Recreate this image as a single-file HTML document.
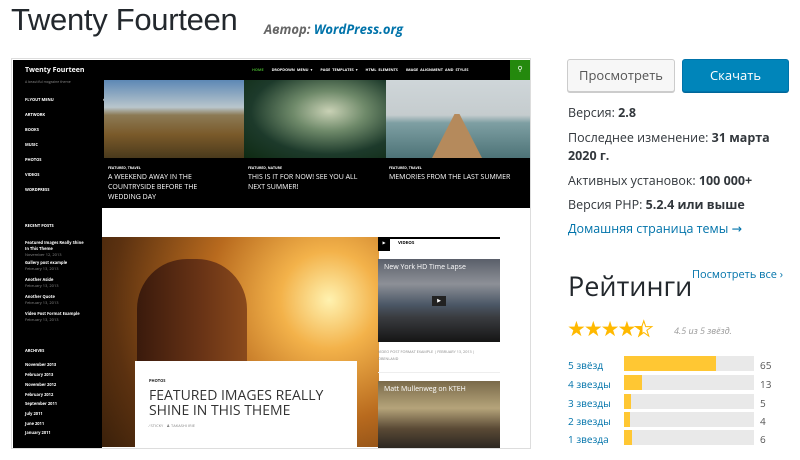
<!DOCTYPE html>
<html><head><meta charset="utf-8"><style>
*{margin:0;padding:0;box-sizing:border-box}
body{width:800px;height:460px;background:#fff;font-family:"Open Sans","DejaVu Sans","Liberation Sans",sans-serif;position:relative;overflow:hidden;color:#32373c}
.a{position:absolute}
.t{white-space:nowrap}
.sb div{position:absolute;left:13px;color:#fff;font-size:4px;font-weight:bold}
.wt{color:#fff;font-size:8px;line-height:10px}
.bar{position:absolute;left:624px;width:130px;height:15px;background:#e9e9e9}
.bar i{display:block;height:100%;background:#ffc733}
.rl{position:absolute;left:568px;font-size:10px;color:#0073aa}
.rn{position:absolute;left:760px;font-size:10px;color:#555}
</style></head><body>
<div class="a t" style="left:11px;top:2px;font-size:31px;font-weight:300;color:#23282d;letter-spacing:-0.3px;font-family:'Liberation Sans',sans-serif">Twenty Fourteen</div>
<div class="a t" style="left:264px;top:20px;font-size:13px;font-style:italic;font-weight:bold;color:#666">Автор: <span style="color:#0073aa">WordPress.org</span></div>

<div class="a" style="left:11px;top:58px;width:520px;height:391px;border:1px solid #ddd;background:#fff;overflow:hidden">
 <div class="a" style="left:1px;top:1px;width:517px;height:148px;background:#000"></div>
 <div class="a" style="left:1px;top:1px;width:89px;height:389px;background:#000"></div>
 <div class="a t" style="left:13px;top:7px;color:#fff;font-size:7px;font-weight:bold">Twenty Fourteen</div>
 <div class="a t" style="left:13px;top:21px;color:#888;font-size:3.5px">A beautiful magazine theme</div>
 <div class="sb">
  <div style="top:39px">FLYOUT MENU <span style="margin-left:48px">›</span></div>
  <div style="top:54px">ARTWORK</div><div style="top:69px">BOOKS</div><div style="top:84px">MUSIC</div>
  <div style="top:99px">PHOTOS</div><div style="top:114px">VIDEOS</div><div style="top:129px">WORDPRESS</div>
  <div style="top:165px">RECENT POSTS</div>
  <div style="top:182px;line-height:6px">Featured Images Really Shine<br>In This Theme<br><span style="color:#888;font-weight:normal">November 12, 2013</span></div>
  <div style="top:202px;line-height:6px">Gallery post example<br><span style="color:#888;font-weight:normal">February 13, 2013</span></div>
  <div style="top:219px;line-height:6px">Another Aside<br><span style="color:#888;font-weight:normal">February 13, 2013</span></div>
  <div style="top:236px;line-height:6px">Another Quote<br><span style="color:#888;font-weight:normal">February 13, 2013</span></div>
  <div style="top:253px;line-height:6px">Video Post Format Example<br><span style="color:#888;font-weight:normal">February 13, 2013</span></div>
  <div style="top:290px">ARCHIVES</div>
  <div style="top:304px">November 2013</div><div style="top:314px">February 2013</div><div style="top:324px">November 2012</div>
  <div style="top:334px">February 2012</div><div style="top:343px">September 2011</div><div style="top:353px">July 2011</div>
  <div style="top:363px">June 2011</div><div style="top:372px">January 2011</div>
 </div>
 <div class="a t" style="left:240px;top:8px;color:#fff;font-size:3.8px;font-weight:bold;word-spacing:1px"><span style="color:#41a62a">HOME</span> &nbsp;&nbsp; DROPDOWN MENU ▾ &nbsp;&nbsp; PAGE TEMPLATES ▾ &nbsp;&nbsp; HTML ELEMENTS &nbsp;&nbsp; IMAGE ALIGNMENT AND STYLES</div>
 <div class="a" style="left:498px;top:1px;width:20px;height:20px;background:#24890d;color:#fff;font-size:7px;text-align:center;line-height:20px">⚲</div>
 <div class="a" style="left:92px;top:21px;width:140px;height:78px;background:linear-gradient(180deg,#5d88b5 0%,#b9c6cc 35%,#8c7a55 45%,#7a5a2a 70%,#4a3a1c 100%)"></div>
 <div class="a" style="left:232px;top:21px;width:142px;height:78px;background:radial-gradient(ellipse at 60% 40%,#c9d1b5 0%,#6f8a6a 30%,#1d3a2b 65%,#0e2a12 100%)"></div>
 <div class="a" style="left:374px;top:21px;width:144px;height:78px;background:linear-gradient(180deg,#cfd6d9 0%,#c5ccce 45%,#7e9fa3 55%,#4d7377 100%)"></div>
 <div class="a" style="left:420px;top:55px;width:50px;height:44px;background:#b58a5c;clip-path:polygon(45% 0,55% 0,100% 100%,0 100%)"></div>
 <div class="a wt" style="left:96px;top:105px;font-size:3.5px;font-weight:bold">FEATURED, TRAVEL</div>
 <div class="a wt" style="left:236px;top:105px;font-size:3.5px;font-weight:bold">FEATURED, NATURE</div>
 <div class="a wt" style="left:377px;top:105px;font-size:3.5px;font-weight:bold">FEATURED, TRAVEL</div>
 <div class="a wt" style="left:96px;top:114px;font-size:7px">A WEEKEND AWAY IN THE<br>COUNTRYSIDE BEFORE THE<br>WEDDING DAY</div>
 <div class="a wt" style="left:236px;top:114px;font-size:7px">THIS IS IT FOR NOW! SEE YOU ALL<br>NEXT SUMMER!</div>
 <div class="a wt" style="left:377px;top:114px;font-size:7px">MEMORIES FROM THE LAST SUMMER</div>
 <div class="a" style="left:90px;top:178px;width:277px;height:210px;background:radial-gradient(circle at 82% 30%,#fff2b0 0%,#f3b24a 18%,#b86a1e 45%,#5b3110 80%,#3a200a 100%)"></div>
 <div class="a" style="left:125px;top:200px;width:110px;height:188px;border-radius:50px 50px 10px 10px;background:linear-gradient(90deg,#3a1a0c,#6a3416 60%,#8a4a1c)"></div>
 <div class="a" style="left:123px;top:302px;width:222px;height:88px;background:#fff"></div>
 <div class="a t" style="left:137px;top:320px;font-size:4px;font-weight:bold;color:#222">PHOTOS</div>
 <div class="a" style="left:137px;top:329px;font-size:14px;line-height:15px;color:#333">FEATURED IMAGES REALLY<br>SHINE IN THIS THEME</div>
 <div class="a t" style="left:137px;top:364px;font-size:4px;color:#888">⁄ STICKY &nbsp; ♟ TAKASHI IRIE</div>
 <div class="a" style="left:366px;top:178px;width:122px;height:2px;background:#000"></div>
 <div class="a" style="left:366px;top:178px;width:12px;height:14px;background:#000;color:#fff;font-size:4px;text-align:center;line-height:14px">▶</div>
 <div class="a t" style="left:386px;top:181px;font-size:4.5px;font-weight:bold;color:#000">VIDEOS</div>
 <div class="a" style="left:366px;top:200px;width:122px;height:83px;background:linear-gradient(180deg,#5a5f6a 0%,#8d9097 30%,#4b5766 55%,#3a3c40 70%,#151515 100%)"></div>
 <div class="a t" style="left:372px;top:204px;font-size:7px;color:#fff">New York HD Time Lapse</div>
 <div class="a" style="left:420px;top:237px;width:14px;height:10px;background:#222;color:#fff;font-size:5px;text-align:center;line-height:10px">▶</div>
 <div class="a" style="left:366px;top:290px;font-size:3.8px;line-height:7px;color:#888">VIDEO POST FORMAT EXAMPLE | FEBRUARY 13, 2013 |<br>OBENLAND</div>
 <div class="a" style="left:366px;top:313px;width:122px;height:1px;background:#eee"></div>
 <div class="a" style="left:366px;top:322px;width:122px;height:68px;background:linear-gradient(180deg,#7a6a4a 0%,#b5a47a 40%,#5a4a35 70%,#2a2520 100%)"></div>
 <div class="a t" style="left:372px;top:326px;font-size:7px;color:#fff">Matt Mullenweg on KTEH</div>
</div>

<div class="a" style="left:567px;top:59px;width:108px;height:33px;border:1px solid #ccc;border-radius:3px;background:#f7f7f7;color:#555;font-size:13px;text-align:center;line-height:31px;box-shadow:0 1px 0 #ccc">Просмотреть</div>
<div class="a" style="left:682px;top:59px;width:107px;height:33px;border-radius:3px;background:#0085ba;border:1px solid #0073aa;color:#fff;font-size:13px;text-align:center;line-height:31px;box-shadow:0 1px 0 #006799">Скачать</div>
<div class="a t" style="left:568px;top:104px;font-size:12.5px;color:#32373c">Версия: <b>2.8</b></div>
<div class="a t" style="left:568px;top:129px;font-size:12.5px;line-height:18px;color:#32373c">Последнее изменение: <b>31 марта<br>2020 г.</b></div>
<div class="a t" style="left:568px;top:172px;font-size:12.5px;color:#32373c">Активных установок: <b>100 000+</b></div>
<div class="a t" style="left:568px;top:196px;font-size:12.5px;color:#32373c">Версия PHP: <b>5.2.4 или выше</b></div>
<div class="a t" style="left:568px;top:220px;font-size:12.5px;color:#0073aa">Домашняя страница темы →</div>
<div class="a t" style="left:568px;top:267px;font-size:27px;color:#23282d">Рейтинги</div>
<div class="a t" style="left:692px;top:267px;font-size:11px;color:#0073aa">Посмотреть все ›</div>
<div class="a t" style="left:567px;top:315px;font-size:21px;color:#ffb900;letter-spacing:-2px">★★★★<span style="background:linear-gradient(90deg,#ffb900 50%,#fff 50%);-webkit-background-clip:text;color:transparent;-webkit-text-stroke:1px #ffb900">★</span></div>
<div class="a t" style="left:674px;top:324px;font-size:9px;font-style:italic;color:#999">4.5 из 5 звёзд.</div>
<div class="rl" style="top:358px">5 звёзд</div><div class="bar" style="top:356px"><i style="width:92px"></i></div><div class="rn" style="top:358px">65</div>
<div class="rl" style="top:377px">4 звезды</div><div class="bar" style="top:375px"><i style="width:18px"></i></div><div class="rn" style="top:377px">13</div>
<div class="rl" style="top:396px">3 звезды</div><div class="bar" style="top:394px"><i style="width:7px"></i></div><div class="rn" style="top:396px">5</div>
<div class="rl" style="top:414px">2 звезды</div><div class="bar" style="top:412px"><i style="width:6px"></i></div><div class="rn" style="top:414px">4</div>
<div class="rl" style="top:432px">1 звезда</div><div class="bar" style="top:430px"><i style="width:8px"></i></div><div class="rn" style="top:432px">6</div>
</body></html>
